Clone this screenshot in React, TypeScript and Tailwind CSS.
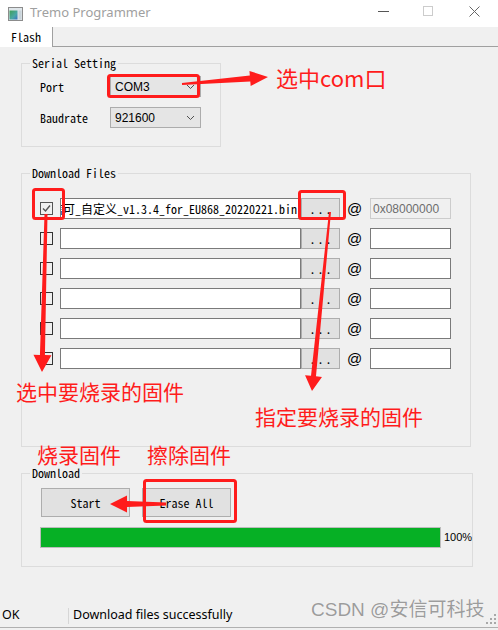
import React from "react";

type Pt = [number, number];

// tapered annotation arrow drawn as one polygon
const arrowPoints = (
  tail: Pt,
  tip: Pt,
  headLen: number,
  headW: number,
  shaftW: number,
  tailW: number
) => {
  const dx = tip[0] - tail[0];
  const dy = tip[1] - tail[1];
  const len = Math.hypot(dx, dy);
  const ux = dx / len;
  const uy = dy / len;
  const nx = -uy;
  const ny = ux;
  const bx = tip[0] - ux * headLen;
  const by = tip[1] - uy * headLen;
  const pts: Pt[] = [
    [tail[0] + (nx * tailW) / 2, tail[1] + (ny * tailW) / 2],
    [bx + (nx * shaftW) / 2, by + (ny * shaftW) / 2],
    [bx + (nx * headW) / 2, by + (ny * headW) / 2],
    tip,
    [bx - (nx * headW) / 2, by - (ny * headW) / 2],
    [bx - (nx * shaftW) / 2, by - (ny * shaftW) / 2],
    [tail[0] - (nx * tailW) / 2, tail[1] - (ny * tailW) / 2],
  ];
  return pts.map((p) => p.join(",")).join(" ");
};

const Chevron = () => (
  <svg width="9" height="6" viewBox="0 0 9 6">
    <path d="M1 1 L4.5 4.5 L8 1" fill="none" stroke="#505050" strokeWidth="1" />
  </svg>
);

const Combo = ({ value }: { value: string }) => (
  <div className="w-[91px] h-[21px] border border-[#acacac] bg-[#e5e5e5] flex items-center justify-between pl-[4px] pr-[5px] font-['Liberation_Sans',sans-serif] text-[12px] text-black">
    <span>{value}</span>
    <Chevron />
  </div>
);

type RowProps = { checked?: boolean; name?: string; addr?: string };

const FileRow = ({ checked, name, addr }: RowProps) => (
  <div className="flex items-center h-[21px]">
    <div
      className={
        checked
          ? "w-[13px] h-[13px] border border-[#555] flex items-center justify-center"
          : "w-[13px] h-[13px] border border-[#333]"
      }
    >
      {checked && (
        <svg width="11" height="11" viewBox="0 0 11 11">
          <path d="M2 5.5 L4.5 8 L9 2.5" fill="none" stroke="#555" strokeWidth="1.4" />
        </svg>
      )}
    </div>
    <div className="ml-[7px] w-[241px] h-[21px] border border-[#7a7a7a] bg-white flex items-center justify-end overflow-hidden whitespace-nowrap pr-[3px] text-[12px] text-black font-['Noto_Sans_Mono_CJK_SC','Liberation_Mono',monospace]">
      {name}
    </div>
    <div className="w-[39px] h-[21px] border border-[#adadad] bg-[#e1e1e1] flex items-center justify-center text-[12px] tracking-[2px] pl-[2px] font-['Noto_Sans_Mono_CJK_SC','Liberation_Mono',monospace]">
      ...
    </div>
    <span className="ml-[7px] w-[13px] text-[15px] leading-none font-['Liberation_Sans',sans-serif] text-black">@</span>
    {addr ? (
      <div className="ml-[10px] w-[81px] h-[21px] border border-[#cccccc] bg-[#f0f0f0] flex items-center pl-[2px] text-[12px] text-[#6d6d6d] font-['Liberation_Sans',sans-serif]">
        {addr}
      </div>
    ) : (
      <div className="ml-[10px] w-[81px] h-[21px] border border-[#7a7a7a] bg-white" />
    )}
  </div>
);

export default function App() {
  return (
    <div className="relative w-[498px] h-[630px] overflow-hidden bg-[#f0f0f0] flex flex-col font-['Noto_Sans_Mono_CJK_SC','Liberation_Mono',monospace] text-[12px] text-black">
      {/* TITLE BAR */}
      <div className="h-[27px] bg-white flex items-center shrink-0">
        <svg className="ml-[8px]" width="15" height="14" viewBox="0 0 15 14">
          <defs>
            <linearGradient id="ic" x1="0" y1="0" x2="1" y2="1">
              <stop offset="0" stopColor="#3f9f55" />
              <stop offset="0.6" stopColor="#4aa7a6" />
              <stop offset="1" stopColor="#3a6fc0" />
            </linearGradient>
          </defs>
          <rect x="0.5" y="0.5" width="14" height="13" fill="#dfe6ea" stroke="#8c8c8c" />
          <rect x="1.5" y="3.5" width="8" height="9" fill="url(#ic)" />
          <rect x="10.5" y="3.5" width="3" height="9" fill="#c9d3da" />
        </svg>
        <span className="ml-[7px] -mt-[2px] text-[13px] text-[#a0a0a0] font-['Noto_Sans','Liberation_Sans',sans-serif]">
          Tremo Programmer
        </span>
        <div className="ml-auto flex items-center h-full">
          <svg width="46" height="27" viewBox="0 0 46 27">
            <path d="M18 11.5 H29" stroke="#555" strokeWidth="1" />
          </svg>
          <svg width="46" height="27" viewBox="0 0 46 27">
            <rect x="17.5" y="6.5" width="9" height="9" fill="none" stroke="#cccccc" />
          </svg>
          <svg width="46" height="27" viewBox="0 0 46 27">
            <path d="M17.5 6.5 L27.5 16.5 M27.5 6.5 L17.5 16.5" stroke="#666" strokeWidth="1" />
          </svg>
        </div>
      </div>

      {/* TABS */}
      <div className="h-[20px] flex shrink-0">
        <div className="w-[53px] h-full bg-white border-r border-[#a0a0a0] flex items-center pl-[11px]">
          Flash
        </div>
        <div className="flex-1 h-full border-b border-[#a0a0a0]" />
      </div>

      {/* CONTENT */}
      <div className="flex-1 flex flex-col pl-[21px] pt-[9px]">
        <fieldset className="w-[200px] h-[91px] border border-[#dcdcdc]">
          <legend className="ml-[8px] px-[2px] leading-[14px]">Serial Setting</legend>
          <div className="pl-[18px] pt-[6px] flex flex-col gap-[10px]">
            <div className="flex items-center">
              <span className="w-[70px]">Port</span>
              <Combo value="COM3" />
            </div>
            <div className="flex items-center">
              <span className="w-[70px]">Baudrate</span>
              <Combo value="921600" />
            </div>
          </div>
        </fieldset>

        <fieldset className="mt-[19px] w-[450px] h-[281px] border border-[#dcdcdc]">
          <legend className="ml-[8px] px-[2px] leading-[14px]">Download Files</legend>
          <div className="pl-[18px] pt-[18px] flex flex-col gap-[9px]">
            <FileRow checked name="安信可_自定义_v1.3.4_for_EU868_20220221.bin" addr="0x08000000" />
            <FileRow />
            <FileRow />
            <FileRow />
            <FileRow />
            <FileRow />
          </div>
        </fieldset>

        <fieldset className="mt-[19px] w-[450px] h-[101px] border border-[#dcdcdc]">
          <legend className="ml-[8px] px-[2px] leading-[14px]">Download</legend>
          <div className="pl-[18px] pt-[8px] flex flex-col">
            <div className="flex ml-[1px]">
              <button className="w-[89px] h-[29px] border border-[#adadad] bg-[#e1e1e1]">Start</button>
              <button className="ml-[12px] w-[89px] h-[29px] border border-[#adadad] bg-[#e1e1e1]">Erase All</button>
            </div>
            <div className="mt-[10px] flex items-center">
              <div className="w-[401px] h-[21px] border border-[#bcbcbc] bg-[#06b025]" />
              <span className="ml-[3px] text-[11px] font-['Liberation_Sans',sans-serif]">100%</span>
            </div>
          </div>
        </fieldset>
      </div>

      {/* STATUS BAR */}
      <div className="h-[24px] shrink-0 flex items-center border-b border-[#b0b0b0] font-['Noto_Sans','Liberation_Sans',sans-serif] text-[12.5px] text-black">
        <span className="w-[68px] pl-[2px]">OK</span>
        <div className="w-px h-[16px] bg-[#d6d6d6]" />
        <span className="ml-[4px]">Download files successfully</span>
      </div>
      <div className="h-[2px] shrink-0" />

      {/* ANNOTATIONS */}
      <svg className="absolute left-0 top-0 pointer-events-none" width="498" height="630" viewBox="0 0 498 630">
        <g fill="none" stroke="#ff1c1c" strokeWidth="3">
          <rect x="108.5" y="75.5" width="90" height="21" rx="2" />
          <rect x="33.5" y="189.5" width="30" height="29" rx="2" />
          <rect x="299.5" y="191.5" width="45" height="27" rx="2" />
          <rect x="144.5" y="480.5" width="91" height="41" rx="2" />
        </g>
        <g fill="#ff1c1c">
          <polygon points={arrowPoints([182, 84], [268, 77], 18, 15, 6, 2)} />
          <polygon points={arrowPoints([46, 214], [42, 372], 17, 18, 5, 3)} />
          <polygon points={arrowPoints([330, 212], [312, 391], 15, 17, 5, 2)} />
          <polygon points={arrowPoints([166, 504], [110, 504], 17, 17, 6, 3)} />
        </g>
        <g fill="#a8a8a8">
          <rect x="494" y="614" width="2" height="2" />
          <rect x="490" y="618" width="2" height="2" />
          <rect x="494" y="618" width="2" height="2" />
          <rect x="486" y="622" width="2" height="2" />
          <rect x="490" y="622" width="2" height="2" />
          <rect x="494" y="622" width="2" height="2" />
        </g>
      </svg>

      <span className="absolute left-[276px] top-[66px] text-[22px] leading-none text-[#ff1c1c] font-['Microsoft_YaHei','Noto_Sans_CJK_SC',sans-serif]">
        选中com口
      </span>
      <span className="absolute left-[16px] top-[381px] text-[21px] leading-none text-[#ff1c1c] font-['Noto_Sans_CJK_SC',sans-serif]">
        选中要烧录的固件
      </span>
      <span className="absolute left-[255px] top-[406px] text-[21px] leading-none text-[#ff1c1c] font-['Noto_Sans_CJK_SC',sans-serif]">
        指定要烧录的固件
      </span>
      <span className="absolute left-[37px] top-[444px] text-[21px] leading-none text-[#ff1c1c] font-['Noto_Sans_CJK_SC',sans-serif]">
        烧录固件
      </span>
      <span className="absolute left-[147px] top-[444px] text-[21px] leading-none text-[#ff1c1c] font-['Noto_Sans_CJK_SC',sans-serif]">
        擦除固件
      </span>
      <span className="absolute left-[311px] top-[600px] text-[19px] leading-none text-[#9c9c9c] [text-shadow:0_0_1px_#ffffff] font-['Liberation_Sans','Noto_Sans_CJK_SC',sans-serif]">
        CSDN @安信可科技
      </span>
    </div>
  );
}
